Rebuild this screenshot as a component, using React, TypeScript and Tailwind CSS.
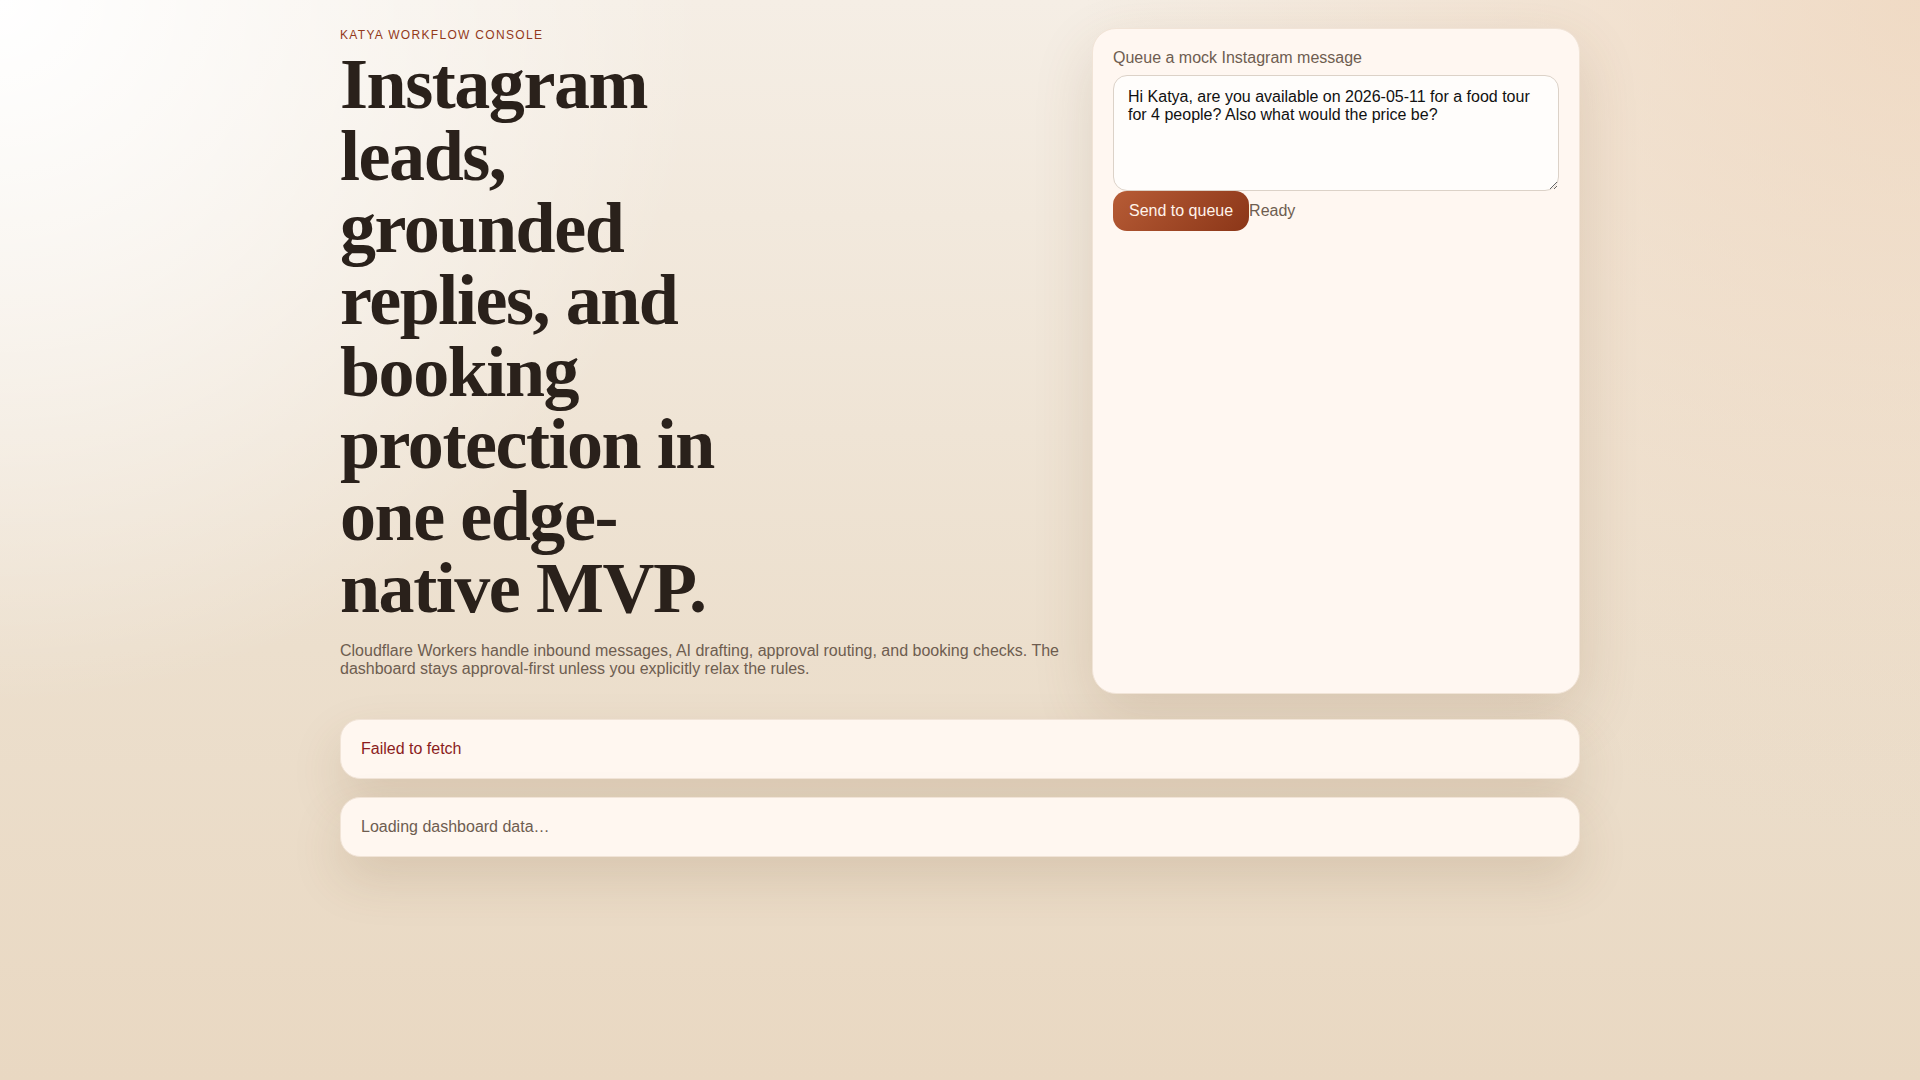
// App.tsx — Katya workflow console (approval-first dashboard shell)

const SANS = "font-['Liberation_Sans',Arial,sans-serif]";

function QueueCard() {
  return (
    <section className="flex flex-col rounded-[24px] border border-[#f1e4d7] bg-[#fff7f1] p-5 shadow-[0_22px_60px_rgba(110,72,36,0.16)]">
      <label htmlFor="mock-message" className="block text-base leading-[normal] text-[#6e5d50]">
        Queue a mock Instagram message
      </label>
      <textarea
        id="mock-message"
        className="mt-2 h-[116px] w-full rounded-[14px] border border-[#dcd2c8] bg-[#fffdfb] px-[14px] py-3 text-base leading-[normal] text-[#111111] outline-none"
        defaultValue="Hi Katya, are you available on 2026-05-11 for a food tour for 4 people? Also what would the price be?"
      />
      <div className="flex items-center">
        <button
          type="button"
          className="rounded-[14px] bg-[linear-gradient(135deg,#b75c36_0%,#8b3618_100%)] px-4 py-[11px] text-base leading-[normal] text-[#fff3ea]"
        >
          Send to queue
        </button>
        <span className="text-base leading-[normal] text-[#6e5d50]">Ready</span>
      </div>
    </section>
  );
}

function StatusCard({ tone, children }: { tone: 'error' | 'muted'; children: string }) {
  return (
    <div className="rounded-[20px] border border-[#f1e4d7] bg-[#fff7f0] px-5 py-5 shadow-[0_22px_50px_rgba(110,72,36,0.15)]">
      <p className={tone === 'error' ? 'text-base leading-[normal] text-[#8b1d1d]' : 'text-base leading-[normal] text-[#6e5d50]'}>
        {children}
      </p>
    </div>
  );
}

export default function App() {
  return (
    <div
      className={`${SANS} min-h-screen bg-[radial-gradient(circle_at_0%_0%,#ffffff_0%,rgba(255,255,255,0)_32%),radial-gradient(circle_at_100%_0%,rgba(238,212,186,0.75)_0%,rgba(238,212,186,0)_38%),linear-gradient(180deg,#f5eee5_0%,#ecdfcd_60%,#e9d8c2_100%)]`}
    >
      <main className="mx-auto w-[1240px] pt-[28px] pb-10">
        {/* Hero + composer */}
        <div className="grid grid-cols-[1fr_488px] gap-6">
          <div className="pb-4">
            <p className="text-[12px] uppercase leading-[normal] tracking-[0.11em] text-[#93391b]">
              Katya workflow console
            </p>
            <h1 className="mt-[6px] max-w-[11ch] font-['Liberation_Serif','Times_New_Roman',serif] text-[72px] font-bold leading-none tracking-[-0.02em] text-[#2a211b]">
              Instagram leads, grounded replies, and booking protection in one edge-native MVP.
            </h1>
            <p className="mt-[18px] text-base leading-[normal] text-[#6e5d50]">
              Cloudflare Workers handle inbound messages, AI drafting, approval routing, and booking checks. The
              dashboard stays approval-first unless you explicitly relax the rules.
            </p>
          </div>
          <QueueCard />
        </div>

        {/* Dashboard state */}
        <div className="mt-[25px] flex flex-col gap-[18px]">
          <StatusCard tone="error">Failed to fetch</StatusCard>
          <StatusCard tone="muted">Loading dashboard data…</StatusCard>
        </div>
      </main>
    </div>
  );
}
